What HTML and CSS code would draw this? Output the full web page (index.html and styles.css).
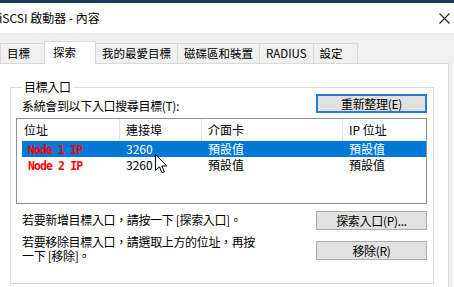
FILE: index.html
```html
<!DOCTYPE html>
<html lang="zh-Hant">
<head>
    <meta charset="UTF-8">
    <meta name="viewport" content="width=device-width, initial-scale=1.0">
    <title>iSCSI 啟動器 - 內容</title>
    <link rel="stylesheet" href="styles.css">
</head>
<body>

    <div class="window">
        <div class="accent"></div>

        <!-- 標題列 -->
        <div class="titlebar">
            <span class="title">iSCSI 啟動器 - 內容</span>
            <svg class="close" width="11" height="11" viewBox="0 0 11 11">
                <path d="M0.5 0.5L10.5 10.5M10.5 0.5L0.5 10.5" stroke="#222" stroke-width="1.1" fill="none"/>
            </svg>
        </div>

        <div class="dialog">
            <!-- 分頁 -->
            <div class="tabs">
                <div class="tab">目標</div>
                <div class="tab active">探索</div>
                <div class="tab">我的最愛目標</div>
                <div class="tab">磁碟區和裝置</div>
                <div class="tab">RADIUS</div>
                <div class="tab">設定</div>
            </div>

            <div class="panel">
                <fieldset class="group">
                    <legend>目標入口</legend>

                    <div class="row row-top">
                        <span class="text">系統會到以下入口搜尋目標(T):</span>
                        <button class="btn default">重新整理(E)</button>
                    </div>

                    <div class="list">
                        <div class="list-head">
                            <div>位址</div>
                            <div>連接埠</div>
                            <div>介面卡</div>
                            <div>IP 位址</div>
                        </div>
                        <div class="list-row selected">
                            <div><span class="node">Node 1 IP</span></div>
                            <div>3260</div>
                            <div>預設值</div>
                            <div>預設值</div>
                        </div>
                        <div class="list-row">
                            <div><span class="node">Node 2 IP</span></div>
                            <div>3260</div>
                            <div>預設值</div>
                            <div>預設值</div>
                        </div>

                        <svg class="cursor" width="13" height="20" viewBox="0 0 13 20">
                            <path d="M0.5 0.5V16.5L4.4 12.8L7 18.8L9.4 17.8L6.9 12H11.8Z" fill="#fff" stroke="#000" stroke-width="1" stroke-linejoin="round"/>
                        </svg>
                    </div>

                    <div class="row row-add">
                        <span class="text">若要新增目標入口，請按一下 [探索入口]。</span>
                        <button class="btn">探索入口(P)...</button>
                    </div>

                    <div class="row row-remove">
                        <span class="text">若要移除目標入口，請選取上方的位址，再按<br>一下 [移除]。</span>
                        <button class="btn">移除(R)</button>
                    </div>
                </fieldset>
            </div>
        </div>
    </div>

</body>
</html>
```

FILE: styles.css
```css
body {
    margin: 0;
    font-family: "Noto Sans CJK TC", "Noto Sans", sans-serif;
    font-size: 12px;
    color: #000;
    background-color: #f0f0f0;
    overflow: hidden;
}
.window {
    width: 454px;
    height: 287px;
    overflow: hidden;
    background-color: #f0f0f0;
}
.accent {
    height: 3px;
    background-color: #1f395c;
}
.titlebar {
    height: 30px;
    background-color: #fff;
    display: flex;
    align-items: center;
    justify-content: space-between;
    padding-right: 4px;
}
.title {
    margin-left: -1px;
    font-size: 12px;
    line-height: 14px;
}
.close {
    display: block;
}

.dialog {
    padding-top: 8px;
}
.tabs {
    display: flex;
    align-items: flex-end;
    height: 22px;
    position: relative;
    z-index: 1;
}
.tab {
    box-sizing: border-box;
    height: 20px;
    min-width: 45px;
    padding: 0 6px;
    margin-right: -1px;
    border: 1px solid #d9d9d9;
    border-bottom: none;
    background-color: #f0f0f0;
    font-size: 11.5px;
    line-height: 19px;
    white-space: nowrap;
}
.tab.active {
    height: 23px;
    min-width: 52px;
    padding-left: 8px;
    margin-bottom: -1px;
    background-color: #fff;
    line-height: 20px;
}

.panel {
    margin-left: -1px;
    width: 450px;
    height: 240px;
    box-sizing: border-box;
    background-color: #fff;
    border: 1px solid #d9d9d9;
    padding: 16px 0 0 10px;
}
.group {
    width: 424px;
    box-sizing: border-box;
    margin: 0;
    padding: 0 6px 20px 5px;
    border: 1px solid #dcdcdc;
}
.group legend {
    margin-left: 6px;
    padding: 0 2px;
    line-height: 14px;
    letter-spacing: -0.3px;
}

.row {
    display: flex;
    justify-content: space-between;
    padding-left: 6px;
}
.text {
    line-height: 14px;
    letter-spacing: -0.35px;
    white-space: nowrap;
}
.row-top {
    align-items: flex-end;
}
.row-add {
    margin-top: 7px;
}
.row-add .text {
    padding-top: 2px;
}
.row-remove {
    margin-top: 5px;
}
.row-remove .btn {
    margin-top: 6px;
}

.btn {
    width: 111px;
    height: 19px;
    box-sizing: border-box;
    padding: 0;
    font-family: inherit;
    font-size: 12px;
    line-height: 16px;
    color: #000;
    background-color: #e1e1e1;
    border: 1px solid #adadad;
    letter-spacing: -0.3px;
}
.btn.default {
    border: 2px solid #2a7bd3;
}

/* 清單 */
.list {
    position: relative;
    margin-top: 5px;
    height: 86px;
    box-sizing: border-box;
    border: 1px solid #8e9094;
    background-color: #fff;
}
.list-head {
    display: grid;
    grid-template-columns: 103px 82px 141px 1fr;
    height: 22px;
}
.list-head div {
    padding-left: 6px;
    line-height: 22px;
    border-right: 1px solid #e5e5e5;
}
.list-head div:first-child {
    padding-left: 7px;
}
.list-head div:last-child {
    border-right: none;
}
.list-row {
    display: grid;
    grid-template-columns: 98px 82px 141px 1fr;
    margin-left: 5px;
    height: 16px;
    line-height: 16px;
}
.list-row div {
    padding-left: 6px;
    white-space: nowrap;
}
.list-row.selected {
    background-color: #0078d7;
    color: #fff;
}
.node {
    font-family: "DejaVu Sans Mono", monospace;
    font-weight: bold;
    font-size: 11.5px;
    letter-spacing: -0.9px;
    color: #ff0000;
}
.cursor {
    position: absolute;
    left: 138px;
    top: 35px;
}
```
